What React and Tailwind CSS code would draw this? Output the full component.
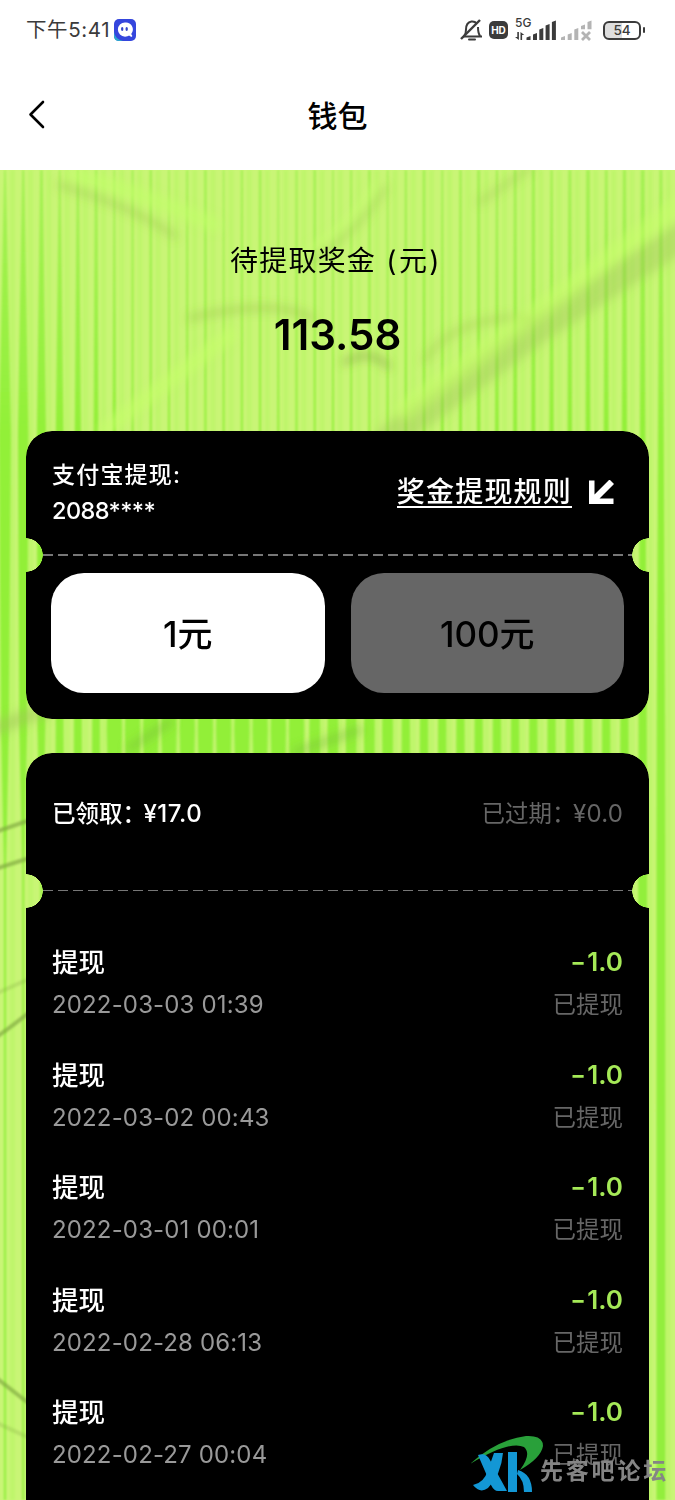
const records = [
  { title: '提现', time: '2022-03-03 01:39', amount: '-1.0', status: '已提现' },
  { title: '提现', time: '2022-03-02 00:43', amount: '-1.0', status: '已提现' },
  { title: '提现', time: '2022-03-01 00:01', amount: '-1.0', status: '已提现' },
  { title: '提现', time: '2022-02-28 06:13', amount: '-1.0', status: '已提现' },
  { title: '提现', time: '2022-02-27 00:04', amount: '-1.0', status: '已提现' },
];

// Stripe widths at the top, above the first card, between the cards and below
const stripes = Array.from({ length: 37 }, (_, i) => {
  const x = 5 + i * 18.22;
  const left = Math.max(0, 1 - i / 7);
  const right = Math.max(0, (i - 20) / 17);
  return {
    x,
    widths: [
      1.5 + (i % 3) * 0.5 + right * 1.5,
      2 + left * 10 + right * 4,
      i < 6 ? 8 : i < 17 ? 15.5 : i < 22 ? 11 : 8.5,
      i < 3 ? 2 : 9,
    ],
  };
});

const stripeTops = [0, 262, 560, 700];

function stripePath({ x, widths }) {
  const leftSide = widths.map((w, k) => `${x - w / 2},${stripeTops[k]}`);
  const rightSide = widths.map((w, k) => `${x + w / 2},${stripeTops[k]}`).reverse();
  return [...leftSide, `${x - widths[3] / 2},1330`, `${x + widths[3] / 2},1330`, ...rightSide].join(' ');
}

function Backdrop() {
  return (
    <svg className="absolute inset-0 w-full h-full" viewBox="0 0 675 1330" preserveAspectRatio="none">
      <defs>
        <filter id="soft" x="-5%" y="-5%" width="110%" height="110%">
          <feGaussianBlur stdDeviation="1" />
        </filter>
        <filter id="fold" x="-50%" y="-50%" width="200%" height="200%">
          <feGaussianBlur stdDeviation="5" />
        </filter>
        <linearGradient id="stripeFade" gradientUnits="userSpaceOnUse" x1="0" y1="0" x2="0" y2="1330">
          <stop offset="0" stopColor="#98ef47" stopOpacity="0.75" />
          <stop offset="0.2" stopColor="#92f038" />
          <stop offset="1" stopColor="#92ee3e" />
        </linearGradient>
      </defs>
      <rect width="675" height="1330" fill="#c9f576" />
      {/* fine weave between the main stripes */}
      <g fill="#b4f65f" opacity="0.45" filter="url(#soft)">
        {stripes.map(s => (
          <rect key={s.x} x={s.x + 5} width="5" height="1330" />
        ))}
      </g>
      <g fill="url(#stripeFade)" filter="url(#soft)">
        {stripes.map(s => (
          <polygon key={s.x} points={stripePath(s)} />
        ))}
      </g>
      {/* folds in the fabric */}
      <g fill="none" filter="url(#fold)" strokeLinecap="round">
        <path d="M60 15Q130 35 175 66" stroke="#8cae45" strokeWidth="6" opacity="0.35" />
        <path d="M75 5Q140 22 215 55" stroke="#c3ff69" strokeWidth="14" opacity="0.6" />
        <path d="M305 94Q355 65 385 18" stroke="#8eb845" strokeWidth="5" opacity="0.45" />
        <path d="M300 86Q350 60 376 16" stroke="#c8ff70" strokeWidth="8" opacity="0.6" />
        <path d="M190 148Q275 128 312 148" stroke="#8db141" strokeWidth="6" opacity="0.4" />
        <path d="M345 192Q370 178 388 196" stroke="#718f32" strokeWidth="6" opacity="0.45" />
        <path d="M425 190Q455 145 530 148" stroke="#99bd49" strokeWidth="7" opacity="0.35" />
        <path d="M390 268L540 158L685 65" stroke="#9cc153" strokeWidth="28" opacity="0.38" />
        <path d="M405 240L560 125L685 30" stroke="#c7ff69" strokeWidth="18" opacity="0.5" />
        <path d="M480 32L530 -2" stroke="#94b64a" strokeWidth="6" opacity="0.35" />
        <path d="M105 260L230 165" stroke="#c6ff6b" strokeWidth="14" opacity="0.6" />
        <path d="M-10 560L45 540" stroke="#9fc557" strokeWidth="14" opacity="0.5" />
        <path d="M130 578L170 552M295 582L360 560" stroke="#77b935" strokeWidth="6" opacity="0.6" />
      </g>
      <g fill="none" stroke="#7da53d" strokeWidth="4" opacity="0.65" filter="url(#soft)">
        <path d="M-5 662L36 648M-5 699L36 686M-5 868Q10 858 36 837" />
        <path d="M-5 1207L36 1239" />
        <path d="M-5 824L36 806M-5 1252L36 1271" opacity="0.4" />
      </g>
    </svg>
  );
}

function StatusBar() {
  return (
    <div className="flex h-[60px] shrink-0 items-center pl-[26px] pr-[30px] text-[#3b3b3b]">
      <span className="pt-px text-[20.5px] tracking-[0.6px]">下午5:41</span>
      <svg className="ml-1 h-[22px] w-[22px]" viewBox="0 0 22 22">
        <rect width="22" height="22" rx="5" fill="#3546dd" />
        <path d="M0 13Q1 20 9 22H5Q0 22 0 17Z" fill="#2ca6ce" />
        <path d="M11 3.5a7 7 0 1 0 0 14.2c1.8 0 3-.4 4-1.1l2.4 1.4 1-1-1.2-2.1A7 7 0 0 0 11 3.5Z" fill="#fff" />
        <ellipse cx="8.2" cy="10" rx="1.2" ry="2" fill="#3445c9" />
        <ellipse cx="12.7" cy="10" rx="1.2" ry="2" fill="#3445c9" />
      </svg>
      <div className="flex-1" />
      <svg className="h-[24px] w-[24px]" viewBox="0 0 24 24" fill="none" stroke="#3b3b3b" strokeWidth="2">
        <path d="M4.4 17.5Q6 15.5 6 11.5Q6 4.5 11.5 3.5Q15 3.2 16.5 5.4M18 9Q18 15 20 17.8M3 18.6H22" />
        <path d="M1 21L20 2" strokeWidth="2.4" />
        <path d="M9 21.5H15" strokeLinecap="round" />
      </svg>
      <span className="ml-[5px] flex h-[18px] w-[19px] items-center justify-center rounded-[5px] bg-[#3b3b3b] text-[10px] font-bold text-white">
        HD
      </span>
      <div className="relative ml-[7px] h-[24px] w-[42px]">
        <span className="absolute left-0 top-[-2px] text-[12px] leading-[14px] font-medium">5G</span>
        <svg className="h-full w-full" viewBox="0 0 42 24" fill="#3b3b3b">
          <path d="M2.3 14h1.6v8L0 19h2.3zM5.5 22V14l3.8 3H7.1v5z" />
          <path d="M11.5 19.5l4-1.5v4h-4zM18 16.5l4-1.5v7h-4zM24.3 11.5l4-1.5v12h-4zM30.6 7.5l4-1.6V22h-4zM36.9 4l4-1.6V22h-4z" />
        </svg>
      </div>
      <svg className="ml-[4px] h-[24px] w-[31px]" viewBox="0 0 31 24" fill="#b4b4b4">
        <path d="M0 19.5l4-1.5v4H0zM6.7 16.5l4-1.5v7h-4zM13.3 11.5l4-1.5v12h-4zM20 8l4-1.4v4.6h-4zM26.5 4L30.5 2.4v8.8h-4z" />
        <path d="M21 14l8 8M29 14l-8 8" stroke="#b4b4b4" strokeWidth="2.8" />
      </svg>
      <div className="ml-[11px] flex h-[19px] w-[38px] items-center justify-center rounded-[6px] border-2 border-[#3b3b3b] bg-linear-to-r from-[#dedede] from-50% to-white to-50%">
        <span className="pt-px text-[13.5px] leading-none font-medium">54</span>
      </div>
      <span className="ml-[2px] h-[6px] w-[2px] rounded-sm bg-[#3b3b3b]" />
    </div>
  );
}

function Perforation({ className }) {
  return (
    <div
      className={`mx-[17px] bg-[repeating-linear-gradient(90deg,#777_0_10px,transparent_10px_15px)] ${className}`}
    />
  );
}

function Watermark() {
  return (
    <div className="absolute left-[470px] top-[1434px] flex h-[60px] w-[205px]">
      <svg className="h-[60px] w-[76px] shrink-0" viewBox="0 0 76 60">
        <path d="M0 30Q26 6 56 2Q73 1 73 12Q71 24 50 36Q62 20 54 13Q40 6 0 30Z" fill="#29a03a" />
        <path d="M8 21Q16 18 20 26L37 57H28Q24 57 21 51Z" fill="#1397d5" />
        <path d="M24 19H33Q31 41 18 54Q10 60 3 51Q14 49 18 36Z" fill="#1397d5" />
        <path d="M38 18H47V58H38Z" fill="#1397d5" />
        <path d="M48 36Q62 40 62 58H54Q54 46 47 40Z" fill="#1397d5" />
      </svg>
      <span className="ml-[-6px] mt-[18px] whitespace-nowrap font-['Noto_Sans_CJK_SC',sans-serif] text-[23px] leading-[34px] font-bold tracking-[2.8px] text-[#858585]">
        先客吧论坛
      </span>
    </div>
  );
}

export default function App() {
  return (
    <div className="relative flex h-[1500px] w-[675px] flex-col overflow-hidden bg-white font-['Inter','Noto_Sans_CJK_SC',sans-serif] text-black">
      <StatusBar />

      {/* Header */}
      <header className="flex h-[110px] shrink-0 items-center px-[26px]">
        <button className="w-10">
          <svg className="h-[30px] w-[20px]" viewBox="0 0 20 30" fill="none" stroke="#000" strokeWidth="2.6">
            <path d="M17 2L4.5 14.5L17 27" strokeLinecap="round" strokeLinejoin="round" />
          </svg>
        </button>
        <h1 className="flex-1 pt-[2px] text-center text-[30px] font-medium">钱包</h1>
        <div className="w-10" />
      </header>

      <main className="relative h-[1330px] shrink-0 overflow-hidden">
        <Backdrop />
        <div className="relative px-[26px]">
          {/* Balance */}
          <section className="flex h-[261px] flex-col items-center pt-[69px]">
            <p className="text-[28px] leading-[44px] tracking-[1.2px] whitespace-nowrap">
              待提取奖金<span className="mr-[3px] tracking-[2.4px]"> (元)</span>
            </p>
            <p className="mt-[25px] text-[42px] leading-[54px] font-semibold">113.58</p>
          </section>

          {/* Withdraw */}
          <section className="h-[288px] rounded-[26px] bg-black [mask-composite:intersect] [mask-image:radial-gradient(circle_at_0_124px,transparent_16.5px,#000_17px),radial-gradient(circle_at_100%_124px,transparent_16.5px,#000_17px)]">
            <div className="flex h-[123px] items-center justify-between pl-[26px] pr-[35px] text-white">
              <div className="text-[23px] leading-[36px] font-medium tracking-[1.2px]">
                <p>支付宝提现:</p>
                <p className="text-[23.5px] tracking-[-0.6px]">2088****</p>
              </div>
              <div className="flex items-center gap-[16px]">
                <a className="border-b-2 border-white text-[28px] leading-[28px] font-medium tracking-[1.2px]">
                  奖金提现规则
                </a>
                <svg className="h-[26px] w-[26px]" viewBox="0 0 26 26" fill="#fff">
                  <path d="M1 0.5H6.5V14.5L21.5 -0.5L26 4L11.5 18.5H25.5V24H1Z" />
                </svg>
              </div>
            </div>
            <Perforation className="h-[2px]" />
            <div className="mt-[17px] flex gap-[26px] px-[25px] text-[35px] font-medium">
              <button className="h-[120px] flex-1 rounded-[33px] bg-white pt-[2px]">1元</button>
              <button className="h-[120px] flex-1 rounded-[33px] bg-[#666] pt-[2px]">100元</button>
            </div>
          </section>

          {/* Records */}
          <section className="mt-[34px] h-[800px] rounded-t-[26px] bg-black [mask-composite:intersect] [mask-image:radial-gradient(circle_at_0_138px,transparent_16.5px,#000_17px),radial-gradient(circle_at_100%_138px,transparent_16.5px,#000_17px)]">
            <div className="flex h-[137px] justify-between px-[26px] pt-[44px] text-[23.5px] leading-[34px]">
              <span className="font-medium text-white">
                已领取<span className="tracking-[-2.5px]">：</span>
                <span className="text-[24px] tracking-[0.5px]">¥17.0</span>
              </span>
              <span className="text-[#666]">
                已过期<span className="tracking-[-2.5px]">：</span>
                <span className="text-[24px] tracking-[0.2px]">¥0.0</span>
              </span>
            </div>
            <Perforation className="h-px" />
            <div className="px-[26px] pt-[49px]">
              {records.map(r => (
                <div key={r.time} className="h-[112.5px]">
                  <div className="flex items-center justify-between leading-[44px] font-medium">
                    <span className="text-[26.5px] text-white">{r.title}</span>
                    <span className="text-[26px] font-semibold text-[#a5e957]">
                      <span className="mr-[3px] inline-block scale-x-130">{r.amount[0]}</span>
                      {r.amount.slice(1)}
                    </span>
                  </div>
                  <div className="flex items-center justify-between leading-[42px]">
                    <span className="text-[24px] tracking-[0.15px] text-[#999]">{r.time}</span>
                    <span className="text-[23.5px] text-[#666]">{r.status}</span>
                  </div>
                </div>
              ))}
            </div>
          </section>
        </div>
      </main>

      <Watermark />
    </div>
  );
}
